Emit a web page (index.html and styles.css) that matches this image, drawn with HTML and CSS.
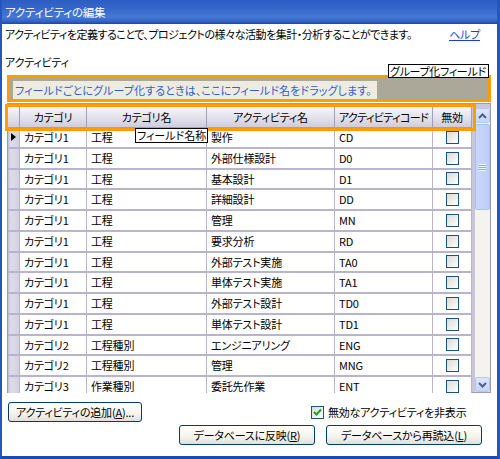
FILE: index.html
```html
<!DOCTYPE html>
<html lang="ja">
<head>
<meta charset="utf-8">
<title>アクティビティの編集</title>
<link rel="stylesheet" href="styles.css">
</head>
<body>
<div class="window">
  <div class="titlebar">アクティビティの編集</div>
  <div class="content">
    <div class="desc-row">
      <span class="desc">アクティビティを定義することで、プロジェクトの様々な活動を集計・分析することができます。</span>
      <a class="help" href="#">ヘルプ</a>
    </div>
    <div class="section-label">アクティビティ</div>
    <div class="group-wrap">
      <div class="group-panel">
        <div class="group-hint">フィールドごとにグループ化するときは、ここにフィールド名をドラッグします。</div>
      </div>
      <div class="tip tip-group">グループ化フィールド</div>
    </div>
    <div class="grid">
      <div class="grid-main">
        <div class="grid-head">
          <div class="hcell"></div>
          <div class="hcell">カテゴリ</div>
          <div class="hcell">カテゴリ名</div>
          <div class="hcell">アクティビティ名</div>
          <div class="hcell hcode">アクティビティコード</div>
          <div class="hcell">無効</div>
        </div>
        <div class="grid-body">
          <div class="row"><div class="ind"><span class="arrow"></span></div><div class="cell">カテゴリ1</div><div class="cell">工程</div><div class="cell">製作</div><div class="cell">CD</div><div class="cell chk"><span class="cb"></span></div></div>
          <div class="row"><div class="ind"></div><div class="cell">カテゴリ1</div><div class="cell">工程</div><div class="cell">外部仕様設計</div><div class="cell">D0</div><div class="cell chk"><span class="cb"></span></div></div>
          <div class="row"><div class="ind"></div><div class="cell">カテゴリ1</div><div class="cell">工程</div><div class="cell">基本設計</div><div class="cell">D1</div><div class="cell chk"><span class="cb"></span></div></div>
          <div class="row"><div class="ind"></div><div class="cell">カテゴリ1</div><div class="cell">工程</div><div class="cell">詳細設計</div><div class="cell">DD</div><div class="cell chk"><span class="cb"></span></div></div>
          <div class="row"><div class="ind"></div><div class="cell">カテゴリ1</div><div class="cell">工程</div><div class="cell">管理</div><div class="cell">MN</div><div class="cell chk"><span class="cb"></span></div></div>
          <div class="row"><div class="ind"></div><div class="cell">カテゴリ1</div><div class="cell">工程</div><div class="cell">要求分析</div><div class="cell">RD</div><div class="cell chk"><span class="cb"></span></div></div>
          <div class="row"><div class="ind"></div><div class="cell">カテゴリ1</div><div class="cell">工程</div><div class="cell">外部テスト実施</div><div class="cell">TA0</div><div class="cell chk"><span class="cb"></span></div></div>
          <div class="row"><div class="ind"></div><div class="cell">カテゴリ1</div><div class="cell">工程</div><div class="cell">単体テスト実施</div><div class="cell">TA1</div><div class="cell chk"><span class="cb"></span></div></div>
          <div class="row"><div class="ind"></div><div class="cell">カテゴリ1</div><div class="cell">工程</div><div class="cell">外部テスト設計</div><div class="cell">TD0</div><div class="cell chk"><span class="cb"></span></div></div>
          <div class="row"><div class="ind"></div><div class="cell">カテゴリ1</div><div class="cell">工程</div><div class="cell">単体テスト設計</div><div class="cell">TD1</div><div class="cell chk"><span class="cb"></span></div></div>
          <div class="row"><div class="ind"></div><div class="cell">カテゴリ2</div><div class="cell">工程種別</div><div class="cell">エンジニアリング</div><div class="cell">ENG</div><div class="cell chk"><span class="cb"></span></div></div>
          <div class="row"><div class="ind"></div><div class="cell">カテゴリ2</div><div class="cell">工程種別</div><div class="cell">管理</div><div class="cell">MNG</div><div class="cell chk"><span class="cb"></span></div></div>
          <div class="row"><div class="ind"></div><div class="cell">カテゴリ3</div><div class="cell">作業種別</div><div class="cell">委託先作業</div><div class="cell">ENT</div><div class="cell chk"><span class="cb"></span></div></div>
        </div>
        <div class="head-highlight"></div>
        <div class="tip tip-field">フィールド名称</div>
      </div>
      <div class="scrollbar">
        <div class="sb-btn">
          <svg width="9" height="6" viewBox="0 0 9 6"><path d="M1 5 L4.5 1.5 L8 5" fill="none" stroke="#4D6185" stroke-width="2"/></svg>
        </div>
        <div class="sb-thumb"><span class="grip"></span></div>
        <div class="sb-track"></div>
        <div class="sb-btn">
          <svg width="9" height="6" viewBox="0 0 9 6"><path d="M1 1 L4.5 4.5 L8 1" fill="none" stroke="#4D6185" stroke-width="2"/></svg>
        </div>
      </div>
    </div>
    <div class="bottom-row1">
      <button class="btn btn-add">アクティビティの追加(<u>A</u>)...</button>
      <label class="hide-opt">
        <span class="cb checked">
          <svg width="11" height="11" viewBox="0 0 11 11"><path d="M2 5 L4.5 7.5 L9 2.5" fill="none" stroke="#21A121" stroke-width="2"/></svg>
        </span>
        <span>無効なアクティビティを非表示</span>
      </label>
    </div>
    <div class="bottom-row2">
      <button class="btn btn-apply">データベースに反映(<u>R</u>)</button>
      <button class="btn btn-reload">データベースから再読込(<u>L</u>)</button>
    </div>
  </div>
</div>
</body>
</html>
```
FILE: styles.css
```css
* { box-sizing: border-box; }
html, body { margin: 0; padding: 0; }
body {
  width: 500px;
  height: 459px;
  overflow: hidden;
  background: #fff;
  font-family: "Noto Sans CJK JP", "Noto Sans", sans-serif;
  font-size: 11px;
  letter-spacing: -0.2px;
  color: #000;
  font-feature-settings: "palt";
  white-space: nowrap;
}
.window {
  width: 500px;
  height: 459px;
  border-left: 2px solid #2456BE;
  border-right: 3px solid #2456BE;
  border-bottom: 3px solid #1C4AB0;
  display: flex;
  flex-direction: column;
}
.titlebar {
  height: 24px;
  line-height: 24px;
  padding-left: 3px;
  color: #fff;
  font-size: 11.5px;
  background: linear-gradient(180deg, #2C5DC2 0%, #3566CA 35%, #4679D6 70%, #3466C8 88%, #1B46A8 100%);
}
.content {
  flex: 1;
  display: flex;
  flex-direction: column;
  padding: 0 6px 0 3px;
}
.desc-row {
  margin-top: 2px;
  height: 16px;
  line-height: 16px;
  display: flex;
  justify-content: space-between;
}
.desc {
  letter-spacing: -0.5px;
}
.help {
  color: #1B3FD6;
  text-decoration: underline;
  margin-right: 11px;
}
.section-label {
  margin-top: 12px;
  height: 16px;
  line-height: 16px;
}
.group-wrap {
  position: relative;
  margin-top: 5px;
  margin-left: 2px;
}
.group-panel {
  height: 27px;
  border: 3px solid #FF9C00;
  background: #ACA899;
  padding: 3px 0 0 3px;
}
.group-hint {
  width: 364px;
  height: 18px;
  line-height: 18px;
  padding-left: 2px;
  background: #EEEBE0;
  color: #2F5FD0;
  letter-spacing: 0.1px;
}
.tip {
  position: absolute;
  background: #fff;
  border: 1px solid #000;
  color: #000;
  white-space: nowrap;
  font-size: 11px;
  line-height: 12px;
  padding: 0 1px;
  overflow: hidden;
}
.tip-group {
  left: 381px;
  top: -11px;
  width: 101px;
  height: 14px;
  letter-spacing: -0.3px;
}
.grid {
  margin-top: 1px;
  margin-left: 2px;
  height: 290px;
  border: 1px solid #9C99B2;
  display: flex;
  background: #C9C6D9;
}
.grid-main {
  position: relative;
  width: 464px;
  height: 100%;
  background: #fff;
  overflow: visible;
}
.grid-head, .row {
  display: grid;
  grid-template-columns: 12px 67px 120px 128px 98px 39px;
}
.grid-head {
  height: 24px;
  padding-top: 3px;
  background: #fff;
}
.hcell {
  background: linear-gradient(180deg, #F6F6FA 0%, #E6E5EE 45%, #CFCDDD 100%);
  border-right: 1px solid #A29EBB;
  border-bottom: 1px solid #A29EBB;
  text-align: center;
  line-height: 20px;
  height: 21px;
  overflow: hidden;
}
.hcode {
  letter-spacing: -0.6px;
}
.grid-body {
  height: 265px;
  overflow: hidden;
  background: #B8B4CE;
}
.row {
  height: 20.75px;
  border-bottom: 2px solid #B8B4CE;
}
.cell {
  background: #fff;
  border-right: 1px solid #B8B4CE;
  padding-left: 4px;
  line-height: 18px;
  white-space: nowrap;
  overflow: hidden;
}
.cell.chk {
  display: flex;
  align-items: center;
  justify-content: center;
  padding-left: 0;
}
.ind {
  background: linear-gradient(90deg, #C3C0D6 0%, #DEDCE9 25%, #D3D1E1 100%);
  border-right: 1px solid #B8B4CE;
  position: relative;
}
.arrow {
  position: absolute;
  left: 3px;
  top: 5px;
  width: 0;
  height: 0;
  border-top: 4px solid transparent;
  border-bottom: 4px solid transparent;
  border-left: 5px solid #000;
}
.cb {
  display: inline-block;
  flex: none;
  width: 13px;
  height: 13px;
  border: 1px solid #1C5180;
  background: linear-gradient(135deg, #DCDCD5 0%, #EDEDE8 50%, #FFFFFF 100%);
}
.cb.checked {
  display: inline-flex;
  align-items: center;
  justify-content: center;
}
.head-highlight {
  position: absolute;
  left: -3px;
  top: 0;
  width: 471px;
  height: 27px;
  border: 3px solid #FF9C00;
}
.tip-field {
  left: 127px;
  top: 24px;
  width: 73px;
  height: 15px;
  line-height: 13px;
  letter-spacing: 0px;
}
.scrollbar {
  margin-left: 3px;
  margin-top: 4px;
  width: 16px;
  display: flex;
  flex-direction: column;
  background: #F4F3EE;
}
.sb-btn {
  height: 15px;
  background: linear-gradient(180deg, #DCE6FD 0%, #C4D5FB 100%);
  border: 1px solid #B6C8F2;
  border-radius: 2px;
  display: flex;
  align-items: center;
  justify-content: center;
}
.sb-thumb {
  height: 86px;
  margin-top: 1px;
  background: linear-gradient(90deg, #C8D7FB 0%, #BCCEF8 100%);
  border: 1px solid #A9BFEF;
  border-radius: 2px;
  display: flex;
  align-items: center;
  justify-content: center;
}
.grip {
  width: 7px;
  height: 7px;
  background: repeating-linear-gradient(180deg, #EEF3FF 0 1px, #8FA9E4 1px 2px);
}
.sb-track {
  flex: 1;
}
.bottom-row1 {
  margin-top: 9px;
  height: 20px;
  display: flex;
  align-items: center;
}
.btn {
  font-family: inherit;
  font-size: 11px;
  letter-spacing: -0.2px;
  font-feature-settings: "palt";
  white-space: nowrap;
  height: 20px;
  padding: 0;
  color: #000;
  border: 1px solid #003C74;
  border-radius: 3px;
  background: linear-gradient(180deg, #FFFFFF 0%, #F4F3EE 60%, #E2DFD6 100%);
  line-height: 18px;
  text-align: center;
}
.btn-add {
  margin-left: 3px;
  width: 134px;
}
.hide-opt {
  margin-left: auto;
  width: 180px;
  display: flex;
  align-items: center;
  gap: 4px;
}
.bottom-row2 {
  margin-top: 3px;
  height: 20px;
  display: flex;
  justify-content: flex-end;
  gap: 11px;
  padding-right: 9px;
}
.btn-apply { width: 136px; }
.btn-reload { width: 156px; }
```
